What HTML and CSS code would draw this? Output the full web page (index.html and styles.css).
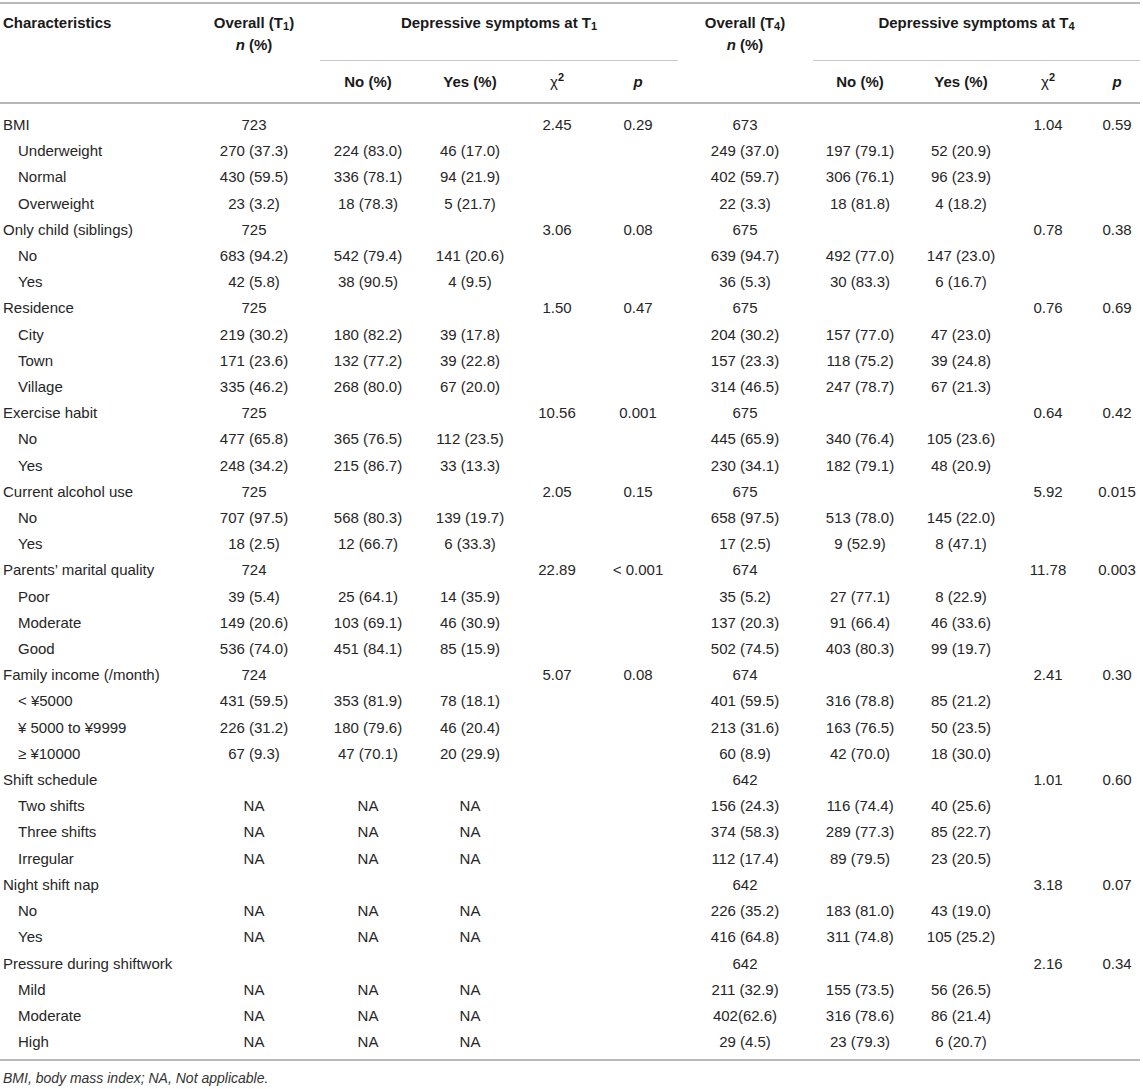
FILE: index.html
```html
<!DOCTYPE html>
<html lang="en">
<head>
    <meta charset="UTF-8">
    <title>Depressive symptoms by characteristics</title>
    <link rel="stylesheet" href="styles.css">
</head>
<body>
    <table class="data">
        <colgroup>
            <col class="c-label">
            <col class="c-ov1">
            <col class="c-no1">
            <col class="c-yes1">
            <col class="c-chi1">
            <col class="c-p1">
            <col class="c-ov4">
            <col class="c-no4">
            <col class="c-yes4">
            <col class="c-chi4">
            <col class="c-p4">
        </colgroup>
        <thead>
            <tr class="head-top">
                <th rowspan="2" class="label">Characteristics</th>
                <th rowspan="2">Overall (T<sub>1</sub>)<br><i>n</i> (%)</th>
                <th colspan="4" class="group"><div class="grp grp-t1">Depressive symptoms at T<sub>1</sub></div></th>
                <th rowspan="2">Overall (T<sub>4</sub>)<br><i>n</i> (%)</th>
                <th colspan="4" class="group"><div class="grp grp-t4">Depressive symptoms at T<sub>4</sub></div></th>
            </tr>
            <tr class="head-sub">
                <th>No (%)</th>
                <th>Yes (%)</th>
                <th><span class="chi">χ</span><sup>2</sup></th>
                <th><i>p</i></th>
                <th>No (%)</th>
                <th>Yes (%)</th>
                <th><span class="chi">χ</span><sup>2</sup></th>
                <th class="last"><i>p</i></th>
            </tr>
        </thead>
        <tbody>
            <tr><td class="label">BMI</td><td>723</td><td></td><td></td><td>2.45</td><td>0.29</td><td>673</td><td></td><td></td><td>1.04</td><td class="last">0.59</td></tr>
            <tr><td class="label sub">Underweight</td><td>270 (37.3)</td><td>224 (83.0)</td><td>46 (17.0)</td><td></td><td></td><td>249 (37.0)</td><td>197 (79.1)</td><td>52 (20.9)</td><td></td><td class="last"></td></tr>
            <tr><td class="label sub">Normal</td><td>430 (59.5)</td><td>336 (78.1)</td><td>94 (21.9)</td><td></td><td></td><td>402 (59.7)</td><td>306 (76.1)</td><td>96 (23.9)</td><td></td><td class="last"></td></tr>
            <tr><td class="label sub">Overweight</td><td>23 (3.2)</td><td>18 (78.3)</td><td>5 (21.7)</td><td></td><td></td><td>22 (3.3)</td><td>18 (81.8)</td><td>4 (18.2)</td><td></td><td class="last"></td></tr>
            <tr><td class="label">Only child (siblings)</td><td>725</td><td></td><td></td><td>3.06</td><td>0.08</td><td>675</td><td></td><td></td><td>0.78</td><td class="last">0.38</td></tr>
            <tr><td class="label sub">No</td><td>683 (94.2)</td><td>542 (79.4)</td><td>141 (20.6)</td><td></td><td></td><td>639 (94.7)</td><td>492 (77.0)</td><td>147 (23.0)</td><td></td><td class="last"></td></tr>
            <tr><td class="label sub">Yes</td><td>42 (5.8)</td><td>38 (90.5)</td><td>4 (9.5)</td><td></td><td></td><td>36 (5.3)</td><td>30 (83.3)</td><td>6 (16.7)</td><td></td><td class="last"></td></tr>
            <tr><td class="label">Residence</td><td>725</td><td></td><td></td><td>1.50</td><td>0.47</td><td>675</td><td></td><td></td><td>0.76</td><td class="last">0.69</td></tr>
            <tr><td class="label sub">City</td><td>219 (30.2)</td><td>180 (82.2)</td><td>39 (17.8)</td><td></td><td></td><td>204 (30.2)</td><td>157 (77.0)</td><td>47 (23.0)</td><td></td><td class="last"></td></tr>
            <tr><td class="label sub">Town</td><td>171 (23.6)</td><td>132 (77.2)</td><td>39 (22.8)</td><td></td><td></td><td>157 (23.3)</td><td>118 (75.2)</td><td>39 (24.8)</td><td></td><td class="last"></td></tr>
            <tr><td class="label sub">Village</td><td>335 (46.2)</td><td>268 (80.0)</td><td>67 (20.0)</td><td></td><td></td><td>314 (46.5)</td><td>247 (78.7)</td><td>67 (21.3)</td><td></td><td class="last"></td></tr>
            <tr><td class="label">Exercise habit</td><td>725</td><td></td><td></td><td>10.56</td><td>0.001</td><td>675</td><td></td><td></td><td>0.64</td><td class="last">0.42</td></tr>
            <tr><td class="label sub">No</td><td>477 (65.8)</td><td>365 (76.5)</td><td>112 (23.5)</td><td></td><td></td><td>445 (65.9)</td><td>340 (76.4)</td><td>105 (23.6)</td><td></td><td class="last"></td></tr>
            <tr><td class="label sub">Yes</td><td>248 (34.2)</td><td>215 (86.7)</td><td>33 (13.3)</td><td></td><td></td><td>230 (34.1)</td><td>182 (79.1)</td><td>48 (20.9)</td><td></td><td class="last"></td></tr>
            <tr><td class="label">Current alcohol use</td><td>725</td><td></td><td></td><td>2.05</td><td>0.15</td><td>675</td><td></td><td></td><td>5.92</td><td class="last">0.015</td></tr>
            <tr><td class="label sub">No</td><td>707 (97.5)</td><td>568 (80.3)</td><td>139 (19.7)</td><td></td><td></td><td>658 (97.5)</td><td>513 (78.0)</td><td>145 (22.0)</td><td></td><td class="last"></td></tr>
            <tr><td class="label sub">Yes</td><td>18 (2.5)</td><td>12 (66.7)</td><td>6 (33.3)</td><td></td><td></td><td>17 (2.5)</td><td>9 (52.9)</td><td>8 (47.1)</td><td></td><td class="last"></td></tr>
            <tr><td class="label">Parents’ marital quality</td><td>724</td><td></td><td></td><td>22.89</td><td>&lt; 0.001</td><td>674</td><td></td><td></td><td>11.78</td><td class="last">0.003</td></tr>
            <tr><td class="label sub">Poor</td><td>39 (5.4)</td><td>25 (64.1)</td><td>14 (35.9)</td><td></td><td></td><td>35 (5.2)</td><td>27 (77.1)</td><td>8 (22.9)</td><td></td><td class="last"></td></tr>
            <tr><td class="label sub">Moderate</td><td>149 (20.6)</td><td>103 (69.1)</td><td>46 (30.9)</td><td></td><td></td><td>137 (20.3)</td><td>91 (66.4)</td><td>46 (33.6)</td><td></td><td class="last"></td></tr>
            <tr><td class="label sub">Good</td><td>536 (74.0)</td><td>451 (84.1)</td><td>85 (15.9)</td><td></td><td></td><td>502 (74.5)</td><td>403 (80.3)</td><td>99 (19.7)</td><td></td><td class="last"></td></tr>
            <tr><td class="label">Family income (/month)</td><td>724</td><td></td><td></td><td>5.07</td><td>0.08</td><td>674</td><td></td><td></td><td>2.41</td><td class="last">0.30</td></tr>
            <tr><td class="label sub">&lt; ¥5000</td><td>431 (59.5)</td><td>353 (81.9)</td><td>78 (18.1)</td><td></td><td></td><td>401 (59.5)</td><td>316 (78.8)</td><td>85 (21.2)</td><td></td><td class="last"></td></tr>
            <tr><td class="label sub">¥ 5000 to ¥9999</td><td>226 (31.2)</td><td>180 (79.6)</td><td>46 (20.4)</td><td></td><td></td><td>213 (31.6)</td><td>163 (76.5)</td><td>50 (23.5)</td><td></td><td class="last"></td></tr>
            <tr><td class="label sub">≥ ¥10000</td><td>67 (9.3)</td><td>47 (70.1)</td><td>20 (29.9)</td><td></td><td></td><td>60 (8.9)</td><td>42 (70.0)</td><td>18 (30.0)</td><td></td><td class="last"></td></tr>
            <tr><td class="label">Shift schedule</td><td></td><td></td><td></td><td></td><td></td><td>642</td><td></td><td></td><td>1.01</td><td class="last">0.60</td></tr>
            <tr><td class="label sub">Two shifts</td><td>NA</td><td>NA</td><td>NA</td><td></td><td></td><td>156 (24.3)</td><td>116 (74.4)</td><td>40 (25.6)</td><td></td><td class="last"></td></tr>
            <tr><td class="label sub">Three shifts</td><td>NA</td><td>NA</td><td>NA</td><td></td><td></td><td>374 (58.3)</td><td>289 (77.3)</td><td>85 (22.7)</td><td></td><td class="last"></td></tr>
            <tr><td class="label sub">Irregular</td><td>NA</td><td>NA</td><td>NA</td><td></td><td></td><td>112 (17.4)</td><td>89 (79.5)</td><td>23 (20.5)</td><td></td><td class="last"></td></tr>
            <tr><td class="label">Night shift nap</td><td></td><td></td><td></td><td></td><td></td><td>642</td><td></td><td></td><td>3.18</td><td class="last">0.07</td></tr>
            <tr><td class="label sub">No</td><td>NA</td><td>NA</td><td>NA</td><td></td><td></td><td>226 (35.2)</td><td>183 (81.0)</td><td>43 (19.0)</td><td></td><td class="last"></td></tr>
            <tr><td class="label sub">Yes</td><td>NA</td><td>NA</td><td>NA</td><td></td><td></td><td>416 (64.8)</td><td>311 (74.8)</td><td>105 (25.2)</td><td></td><td class="last"></td></tr>
            <tr><td class="label">Pressure during shiftwork</td><td></td><td></td><td></td><td></td><td></td><td>642</td><td></td><td></td><td>2.16</td><td class="last">0.34</td></tr>
            <tr><td class="label sub">Mild</td><td>NA</td><td>NA</td><td>NA</td><td></td><td></td><td>211 (32.9)</td><td>155 (73.5)</td><td>56 (26.5)</td><td></td><td class="last"></td></tr>
            <tr><td class="label sub">Moderate</td><td>NA</td><td>NA</td><td>NA</td><td></td><td></td><td>402(62.6)</td><td>316 (78.6)</td><td>86 (21.4)</td><td></td><td class="last"></td></tr>
            <tr><td class="label sub">High</td><td>NA</td><td>NA</td><td>NA</td><td></td><td></td><td>29 (4.5)</td><td>23 (79.3)</td><td>6 (20.7)</td><td></td><td class="last"></td></tr>
        </tbody>
    </table>
    <p class="note">BMI, body mass index; NA, Not applicable.</p>
</body>
</html>
```

FILE: styles.css
```css
body {
    margin: 0;
    padding-top: 2px;
    font-family: "Liberation Sans", Arial, Helvetica, sans-serif;
    font-size: 15px;
    color: #262626;
    background-color: #fff;
}
.data {
    width: 1140px;
    table-layout: fixed;
    border-collapse: collapse;
    border-top: 2px solid #b8b8b8;
    border-bottom: 2px solid #b8b8b8;
}
.c-label { width: 196px; }
.c-ov1 { width: 116px; }
.c-no1 { width: 112px; }
.c-yes1 { width: 92px; }
.c-chi1 { width: 82px; }
.c-p1 { width: 80px; }
.c-ov4 { width: 134px; }
.c-no4 { width: 96px; }
.c-yes4 { width: 106px; }
.c-chi4 { width: 68px; }
.c-p4 { width: 58px; }

thead {
    border-bottom: 2px solid #b8b8b8;
}
th {
    font-weight: bold;
    color: #1a1a1a;
    text-align: center;
    padding: 0 3px;
}
.head-top th {
    vertical-align: top;
    padding-top: 8px;
    line-height: 22px;
}
.head-top th.group {
    padding-left: 0;
    padding-right: 0;
}
.grp {
    padding-bottom: 26px;
    border-bottom: 1px solid #c8c8c8;
}
.grp-t1 {
    margin-left: 8px;
}
.grp-t4 {
    margin-left: 1px;
}
.head-sub th {
    line-height: 21px;
    padding-top: 10px;
    padding-bottom: 10px;
}
sub {
    font-size: 11px;
    vertical-align: -2px;
    line-height: 0;
}
sup {
    font-size: 11px;
    vertical-align: 6px;
    line-height: 0;
}
.chi {
    font-weight: normal;
}

td {
    text-align: center;
    padding: 4px 3px;
    line-height: 18.2px;
    white-space: nowrap;
}
.label {
    text-align: left;
}
td.label {
    padding-left: 3px;
}
td.sub {
    padding-left: 18px;
}
th.last, td.last {
    padding-left: 15px;
}
tbody tr:first-child td {
    padding-top: 12px;
}
tbody tr:last-child td {
    padding-bottom: 8px;
}

.note {
    margin: 8px 0 0 3px;
    font-size: 14px;
    font-style: italic;
    line-height: 18px;
    color: #333;
}
```
